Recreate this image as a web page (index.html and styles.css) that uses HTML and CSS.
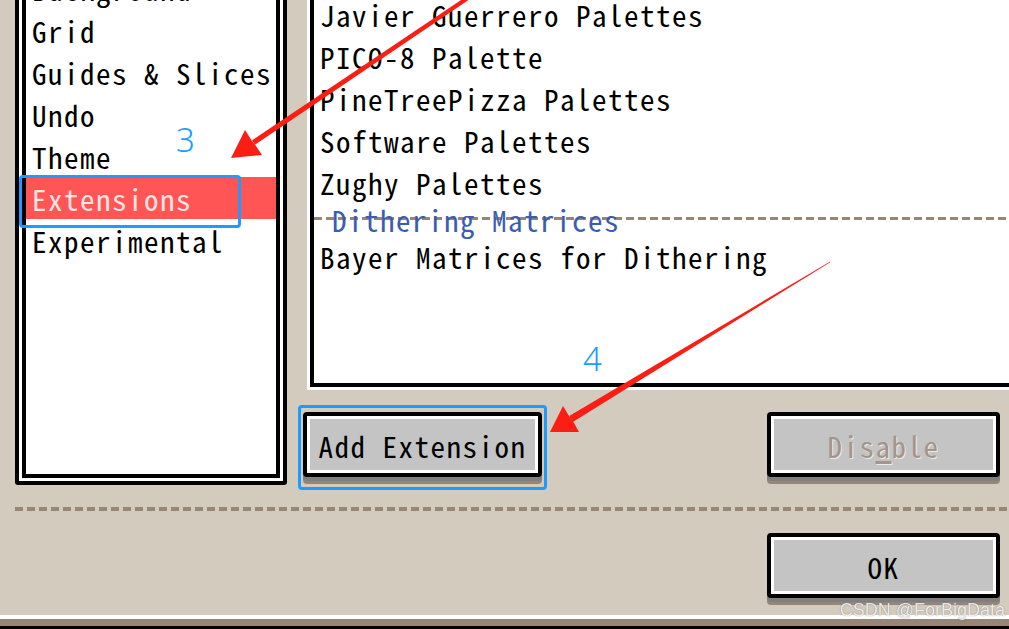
FILE: index.html
```html
<!DOCTYPE html>
<html>
<head>
  <title>Preferences - Extensions</title>
  <link rel="stylesheet" href="styles.css">
</head>
<body>
  <div class="dialog">
    <div class="panes">
      <div class="category-list">
        <ul class="category-inner">
          <li>Background</li>
          <li>Grid</li>
          <li>Guides &amp; Slices</li>
          <li>Undo</li>
          <li>Theme</li>
          <li class="selected">Extensions<span class="mark-box"></span></li>
          <li>Experimental</li>
        </ul>
      </div>

      <div class="extensions-pane">
        <ul class="extension-list">
          <li>Javier Guerrero Palettes</li>
          <li>PICO-8 Palette</li>
          <li>PineTreePizza Palettes</li>
          <li>Software Palettes</li>
          <li>Zughy Palettes</li>
          <li class="group">Dithering Matrices</li>
          <li>Bayer Matrices for Dithering</li>
        </ul>
        <div class="extension-actions">
          <div class="mark-frame">
            <button class="pixel-btn add-btn">Add Extension</button>
          </div>
          <button class="pixel-btn disable-btn" disabled>Dis<span class="mnemonic">a</span>ble</button>
        </div>
      </div>
    </div>

    <div class="separator"></div>

    <div class="dialog-footer">
      <button class="pixel-btn ok-btn">OK</button>
    </div>
    <div class="bottom-bar"></div>
  </div>

  <!-- annotations drawn over the screenshot -->
  <svg class="arrows" viewBox="0 0 1009 629">
    <g fill="#fa1e14">
      <polygon points="252.04,140.34 488.88,-18.66 491.12,-15.34 254.96,144.66"/>
      <polygon points="231,158 245,130 252,141 256,146 262,155"/>
      <polygon points="569.2,416 829.8,261.7 830.2,262.3 572.8,422"/>
      <polygon points="550,432 563,406 569,416 574,423 579,432"/>
    </g>
  </svg>
  <span class="step step-3">3</span>
  <span class="step step-4">4</span>
  <span class="watermark">CSDN @ForBigData</span>
</body>
</html>
```

FILE: styles.css
```css
body {
  margin: 0;
  width: 1009px;
  height: 629px;
  overflow: hidden;
  position: relative;
  background-color: #d4cbbf;
  color: #000;
  font-family: "Noto Sans CJK SC", sans-serif;
  font-size: 29px;
  letter-spacing: 1.5px;
  font-feature-settings: "hwid";
}

ul {
  list-style: none;
  margin: 0;
  padding: 0;
}

li {
  white-space: nowrap;
}

.dialog {
  margin-top: -45px;
}

.panes {
  display: flex;
  align-items: flex-start;
  gap: 20px;
  padding-left: 15px;
}

/* left category list, double black frame */
.category-list {
  width: 272px;
  height: 530px;
  box-sizing: border-box;
  border: 4px solid #000;
  border-radius: 3px;
  padding: 3px;
  background-color: #fff;
}

.category-inner {
  height: 100%;
  box-sizing: border-box;
  border: 4px solid #000;
  padding-top: 1px;
}

.category-inner li {
  height: 42px;
  line-height: 42px;
  padding-left: 6px;
}

.category-inner li.selected {
  position: relative;
  background-color: #ff5555;
  color: #ffe4e4;
}

.mark-box {
  position: absolute;
  left: -7px;
  top: -2px;
  width: 222px;
  height: 53px;
  box-sizing: border-box;
  border: 3px solid #1e9bff;
  border-radius: 4px;
}

/* right side */
.extensions-pane {
  width: 693px;
  display: flex;
  flex-direction: column;
}

.extension-list {
  height: 432px;
  box-sizing: border-box;
  margin: 0 -20px 0 3px;
  padding-top: 38px;
  border-left: 4px solid #000;
  border-bottom: 4px solid #000;
  background-color: #fff;
  box-shadow: -3px 3px 0 #fff;
}

.extension-list li {
  height: 42px;
  line-height: 42px;
  padding-left: 6px;
}

.extension-list li.group {
  height: 32px;
  line-height: 32px;
  padding-left: 18px;
  color: #3a5cb2;
  background: repeating-linear-gradient(90deg, #978677 0 8px, transparent 8px 12px) 0 14px / 100% 3px no-repeat;
}

.extension-actions {
  display: flex;
  justify-content: space-between;
  align-items: flex-start;
  margin-top: 18px;
}

.mark-frame {
  margin-left: -9px;
  padding: 4px 2px 10px;
  border: 3px solid #1e9bff;
  border-radius: 4px;
}

.pixel-btn {
  box-sizing: border-box;
  height: 65px;
  padding: 0;
  border: 4px solid #000;
  border-radius: 4px;
  background-color: #c4c4c4;
  box-shadow: inset 0 0 0 3px #fff, 0 4px 0 #7f7f7f, 0 7px 0 #978677;
  color: #000;
  font-family: inherit;
  font-size: inherit;
  letter-spacing: inherit;
  font-feature-settings: "hwid";
  line-height: 42px;
}

.add-btn {
  width: 239px;
}

.disable-btn {
  width: 233px;
  margin-top: 7px;
  color: #a3958a;
  text-shadow: 1px 1px 0 #eeeae5;
}

.mnemonic {
  text-decoration: underline;
  text-decoration-thickness: 3px;
  text-underline-offset: 3px;
}

.separator {
  height: 4px;
  margin: 17px 0 0 15px;
  background: repeating-linear-gradient(90deg, #978677 0 8px, transparent 8px 12px);
}

.dialog-footer {
  display: flex;
  justify-content: flex-end;
  padding-right: 9px;
  margin-top: 22px;
}

.ok-btn {
  width: 233px;
}

.bottom-bar {
  height: 7px;
  margin-top: 17px;
  border-top: 4px solid #fff;
  border-bottom: 3px solid #000;
  background-color: #978677;
}

/* annotations */
.arrows {
  position: absolute;
  left: 0;
  top: 0;
  width: 1009px;
  height: 629px;
}

.step {
  position: absolute;
  font-family: "Noto Sans", sans-serif;
  font-weight: 300;
  font-size: 33px;
  line-height: 1;
  letter-spacing: 0;
  font-feature-settings: normal;
  color: #1e9bff;
}

.step-3 {
  left: 176px;
  top: 123px;
}

.step-4 {
  left: 583px;
  top: 342px;
}

.watermark {
  position: absolute;
  right: 4px;
  top: 601px;
  font-family: "Liberation Sans", sans-serif;
  font-size: 18px;
  line-height: 1;
  letter-spacing: 0;
  font-feature-settings: normal;
  color: rgba(255, 255, 255, 0.9);
  text-shadow: 0 0 1px rgba(0, 0, 0, 0.55);
}
```
